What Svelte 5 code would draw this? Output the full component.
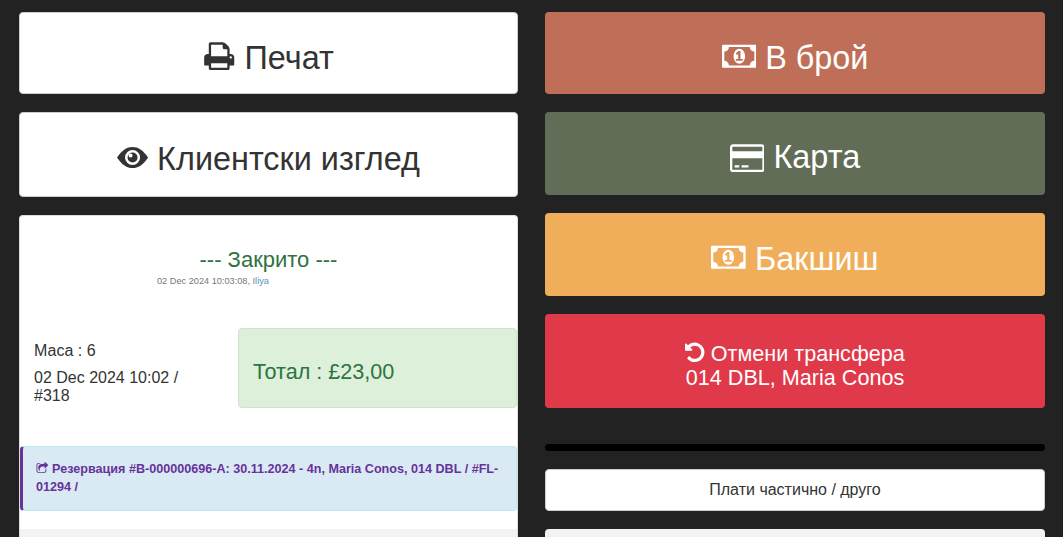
<script>
	const icons = {
		print: { box: '0 0 1792 1792', d: 'M448 1536h896v-256h-896v256zm0-640h896v-384h-160q-40 0-68-28t-28-68v-160h-640v640zm1152 64q0-26-19-45t-45-19-45 19-19 45 19 45 45 19 45-19 19-45zm128 0v416q0 13-9.5 22.5t-22.5 9.5h-224v160q0 40-28 68t-68 28h-960q-40 0-68-28t-28-68v-160h-224q-13 0-22.5-9.5t-9.5-22.5v-416q0-79 56.5-135.5t135.5-56.5h64v-544q0-40 28-68t68-28h672q40 0 88 20t76 48l152 152q28 28 48 76t20 88v256h64q79 0 135.5 56.5t56.5 135.5z' },
		eye: { box: '0 -5 31 31', d: 'M0 10.500C5 3 10 0 15.500 0S26 3 31 10.500C26 18 21 21 15.500 21S5 18 0 10.500ZM15.500 3A7.500 7.500 0 1 0 15.500 18A7.500 7.500 0 1 0 15.500 3ZM15.500 5.500A5 5 0 1 1 15.500 15.500A5 5 0 1 1 15.500 5.500ZM13.500 6.500A2 2 0 1 0 13.500 10.500A2 2 0 1 0 13.500 6.500Z' },
		money: { box: '0 0 1920 1792', d: 'M768 1152h384v-96h-128v-448h-114l-148 137 77 80q42-37 55-57h2v288h-128v96zm512-256q0 70-21 142t-59.500 134-101.500 101-138 39-138-39-101.500-101-59.500-134-21-142 21-142 59.500-134 101.500-101 138-39 138 39 101.500 101 59.500 134 21 142zm512 256v-512q-106 0-181-75t-75-181h-1152q0 106-75 181t-181 75v512q106 0 181 75t75 181h1152q0-106 75-181t181-75zm128-832v1152q0 26-19 45t-45 19h-1792q-26 0-45-19t-19-45v-1152q0-26 19-45t45-19h1792q26 0 45 19t19 45z' },
		card: { box: '0 0 1920 1792', d: 'M1760 128q66 0 113 47t47 113v1216q0 66-47 113t-113 47h-1600q-66 0-113-47t-47-113v-1216q0-66 47-113t113-47h1600zm-1600 128q-13 0-22.500 9.500t-9.500 22.500v224h1664v-224q0-13-9.500-22.500t-22.500-9.500h-1600zm1600 1280q13 0 22.500-9.500t9.500-22.500v-608h-1664v608q0 13 9.500 22.500t22.500 9.500h1600zm-1504-128v-128h256v128h-256zm384 0v-128h384v128h-384z' },
		undo: { box: '128 0 1536 1792', d: 'M1664 896q0 156-61 298t-164 245-245 164-298 61q-172 0-327-72.500t-264-204.500q-7-10-6.500-22.500t8.500-20.500l137-138q10-9 25-9 16 2 23 12 73 95 179 147t225 52q104 0 198.500-40.500t163.500-109.500 109.500-163.500 40.500-198.500-40.500-198.500-109.500-163.500-163.500-109.500-198.500-40.500q-98 0-188 35.500t-160 101.500l137 138q31 30 14 69-17 40-59 40h-448q-26 0-45-19t-19-45v-448q0-42 40-59 39-17 69 14l130 129q107-101 244.500-156.500t284.500-55.500q156 0 298 61t245 164 164 245 61 298z' },
		share: { box: '0 0 1792 1792', d: 'M1472 989v259q0 119-84.500 203.500t-203.500 84.500h-832q-119 0-203.500-84.500t-84.500-203.500v-832q0-119 84.500-203.500t203.500-84.500h255q13 0 22.500 9.500t9.500 22.500q0 27-26 32-77 26-133 60-10 4-16 4h-112q-66 0-113 47t-47 113v832q0 66 47 113t113 47h832q66 0 113-47t47-113v-214q0-19 18-29 28-13 54-37 16-16 35-8 21 9 21 29zm237-496l-384 384q-18 19-45 19-12 0-25-5-39-17-39-59v-192h-160q-323 0-438 131-119 137-74 473 3 23-20 34-8 2-12 2-16 0-26-13-10-14-21-31t-39.500-68.500-49.500-99.500-38.500-114-17.500-122q0-49 3.500-91t14-90 28-88 47-81.500 68.500-74 94.500-61.500 124.500-48.500 159.500-30.500 196.500-11h160v-192q0-42 39-59 13-5 25-5 26 0 45 19l384 384q19 19 19 45t-19 45z' }
	};
</script>

{#snippet icon(name)}
	<svg class="fa {name}" viewBox={icons[name].box} fill="currentColor" aria-hidden="true"><path d={icons[name].d} /></svg>
{/snippet}

<div class="page">
	<div class="col">
		<button class="btn white big print-btn">{@render icon('print')} Печат</button>
		<button class="btn white big view-btn">{@render icon('eye')} Клиентски изглед</button>

		<div class="bill">
			<div class="status">
				<h4>--- Закрито ---</h4>
				<small>02 Dec 2024 10:03:08, <span class="user">Iliya</span></small>
			</div>

			<div class="summary">
				<div class="meta">
					<p>Маса : 6</p>
					<p>02 Dec 2024 10:02 / #318</p>
				</div>
				<div class="total">Тотал : £23,00</div>
			</div>

			<div class="note">
				{@render icon('share')} Резервация #B-000000696-A: 30.11.2024 - 4n, Maria Conos, 014 DBL / #FL-01294 /
			</div>

			<div class="rest"></div>
		</div>
	</div>

	<div class="col">
		<button class="btn big cash">{@render icon('money')} В брой</button>
		<button class="btn big card">{@render icon('card')} Карта</button>
		<button class="btn big tip">{@render icon('money')} Бакшиш</button>
		<button class="btn cancel">{@render icon('undo')} Отмени трансфера<br />014 DBL, Maria Conos</button>
		<div class="divider"></div>
		<button class="btn white small">Плати частично / друго</button>
		<button class="btn light small"></button>
	</div>
</div>

<style>
	:global(body) {
		background: #222;
		overflow: hidden;
	}

	.page {
		display: grid;
		grid-template-columns: 499px 500px;
		column-gap: 27px;
		padding: 12px 18px 0 19px;
		height: 525px;
		overflow: hidden;
		font-family: 'Liberation Sans', Arial, sans-serif;
		color: #333;
	}

	.col {
		display: flex;
		flex-direction: column;
		gap: 18px;
		min-width: 0;
	}

	.btn {
		display: block;
		flex: none;
		width: 100%;
		border: 1px solid transparent;
		border-radius: 4px;
		font-family: inherit;
		text-align: center;
		color: #fff;
		padding: 0;
	}

	.btn.white {
		background: #fff;
		border-color: #ccc;
		color: #333;
	}

	.big {
		height: 83px;
		font-size: 32.4px;
		line-height: 34px;
		padding-top: 8px;
	}

	.print-btn {
		height: 82px;
	}

	.view-btn {
		height: 85px;
	}

	.cash {
		height: 82px;
		background: #bf6f57;
	}

	.card {
		background: #626d57;
	}

	.tip {
		background: #f0ae5a;
	}

	.cancel {
		height: 94px;
		background: #e03a4a;
		font-size: 21.6px;
		line-height: 23.76px;
		padding-top: 8px;
	}

	.divider {
		height: 7px;
		margin-top: 18px;
		border-radius: 4px;
		background: #000;
	}

	.small {
		height: 42px;
		font-size: 16px;
	}

	.light {
		background: #f3f3f3;
	}

	.fa {
		display: inline-block;
		height: 1em;
		vertical-align: -0.12em;
	}

	.fa.print,
	.fa.share {
		width: 1em;
	}

	.fa.eye {
		width: 0.96em;
		height: 0.96em;
	}

	.fa.money,
	.fa.card {
		width: 1.07em;
	}

	.fa.card {
		vertical-align: -0.2em;
	}

	.fa.undo {
		width: 0.9em;
		height: 1.05em;
	}

	.bill {
		flex: 1;
		background: #fff;
		border: 1px solid #ddd;
		border-bottom: 0;
		border-radius: 4px 4px 0 0;
	}

	.status {
		box-sizing: border-box;
		padding-top: 32px;
		height: 112px;
		color: #2e7340;
	}

	.status h4 {
		margin: 0;
		font-size: 22px;
		font-weight: 400;
		line-height: 24px;
		text-align: center;
	}

	.status small {
		display: block;
		margin-top: 3px;
		padding-left: 137px;
		font-size: 9.2px;
		line-height: 12px;
		color: #777;
	}

	.user {
		color: #5b8fb5;
	}

	.summary {
		display: flex;
		align-items: center;
		height: 80px;
	}

	.meta {
		width: 218px;
		padding: 11px 30px 0 14px;
		box-sizing: border-box;
		font-size: 16px;
		line-height: 18px;
	}

	.meta p {
		margin: 0 0 9px;
	}

	.meta p:last-child {
		margin: 0;
	}

	.total {
		flex: 1;
		align-self: stretch;
		display: flex;
		align-items: center;
		padding: 7px 0 0 14px;
		background: #ddf0da;
		border: 1px solid #d0e4c4;
		border-radius: 4px;
		font-size: 21.6px;
		color: #2e7340;
	}

	.note {
		margin-top: 38px;
		height: 65px;
		box-sizing: border-box;
		padding: 13px 13px;
		background: #d9eaf5;
		border: 1px solid #bce8f1;
		border-left: 3px solid #663399;
		border-radius: 4px;
		font-size: 12.6px;
		font-weight: 700;
		line-height: 18px;
		color: #663399;
	}

	.note .fa {
		vertical-align: -0.1em;
	}

	.rest {
		margin-top: 18px;
		height: 40px;
		background: #f3f3f3;
	}
</style>
